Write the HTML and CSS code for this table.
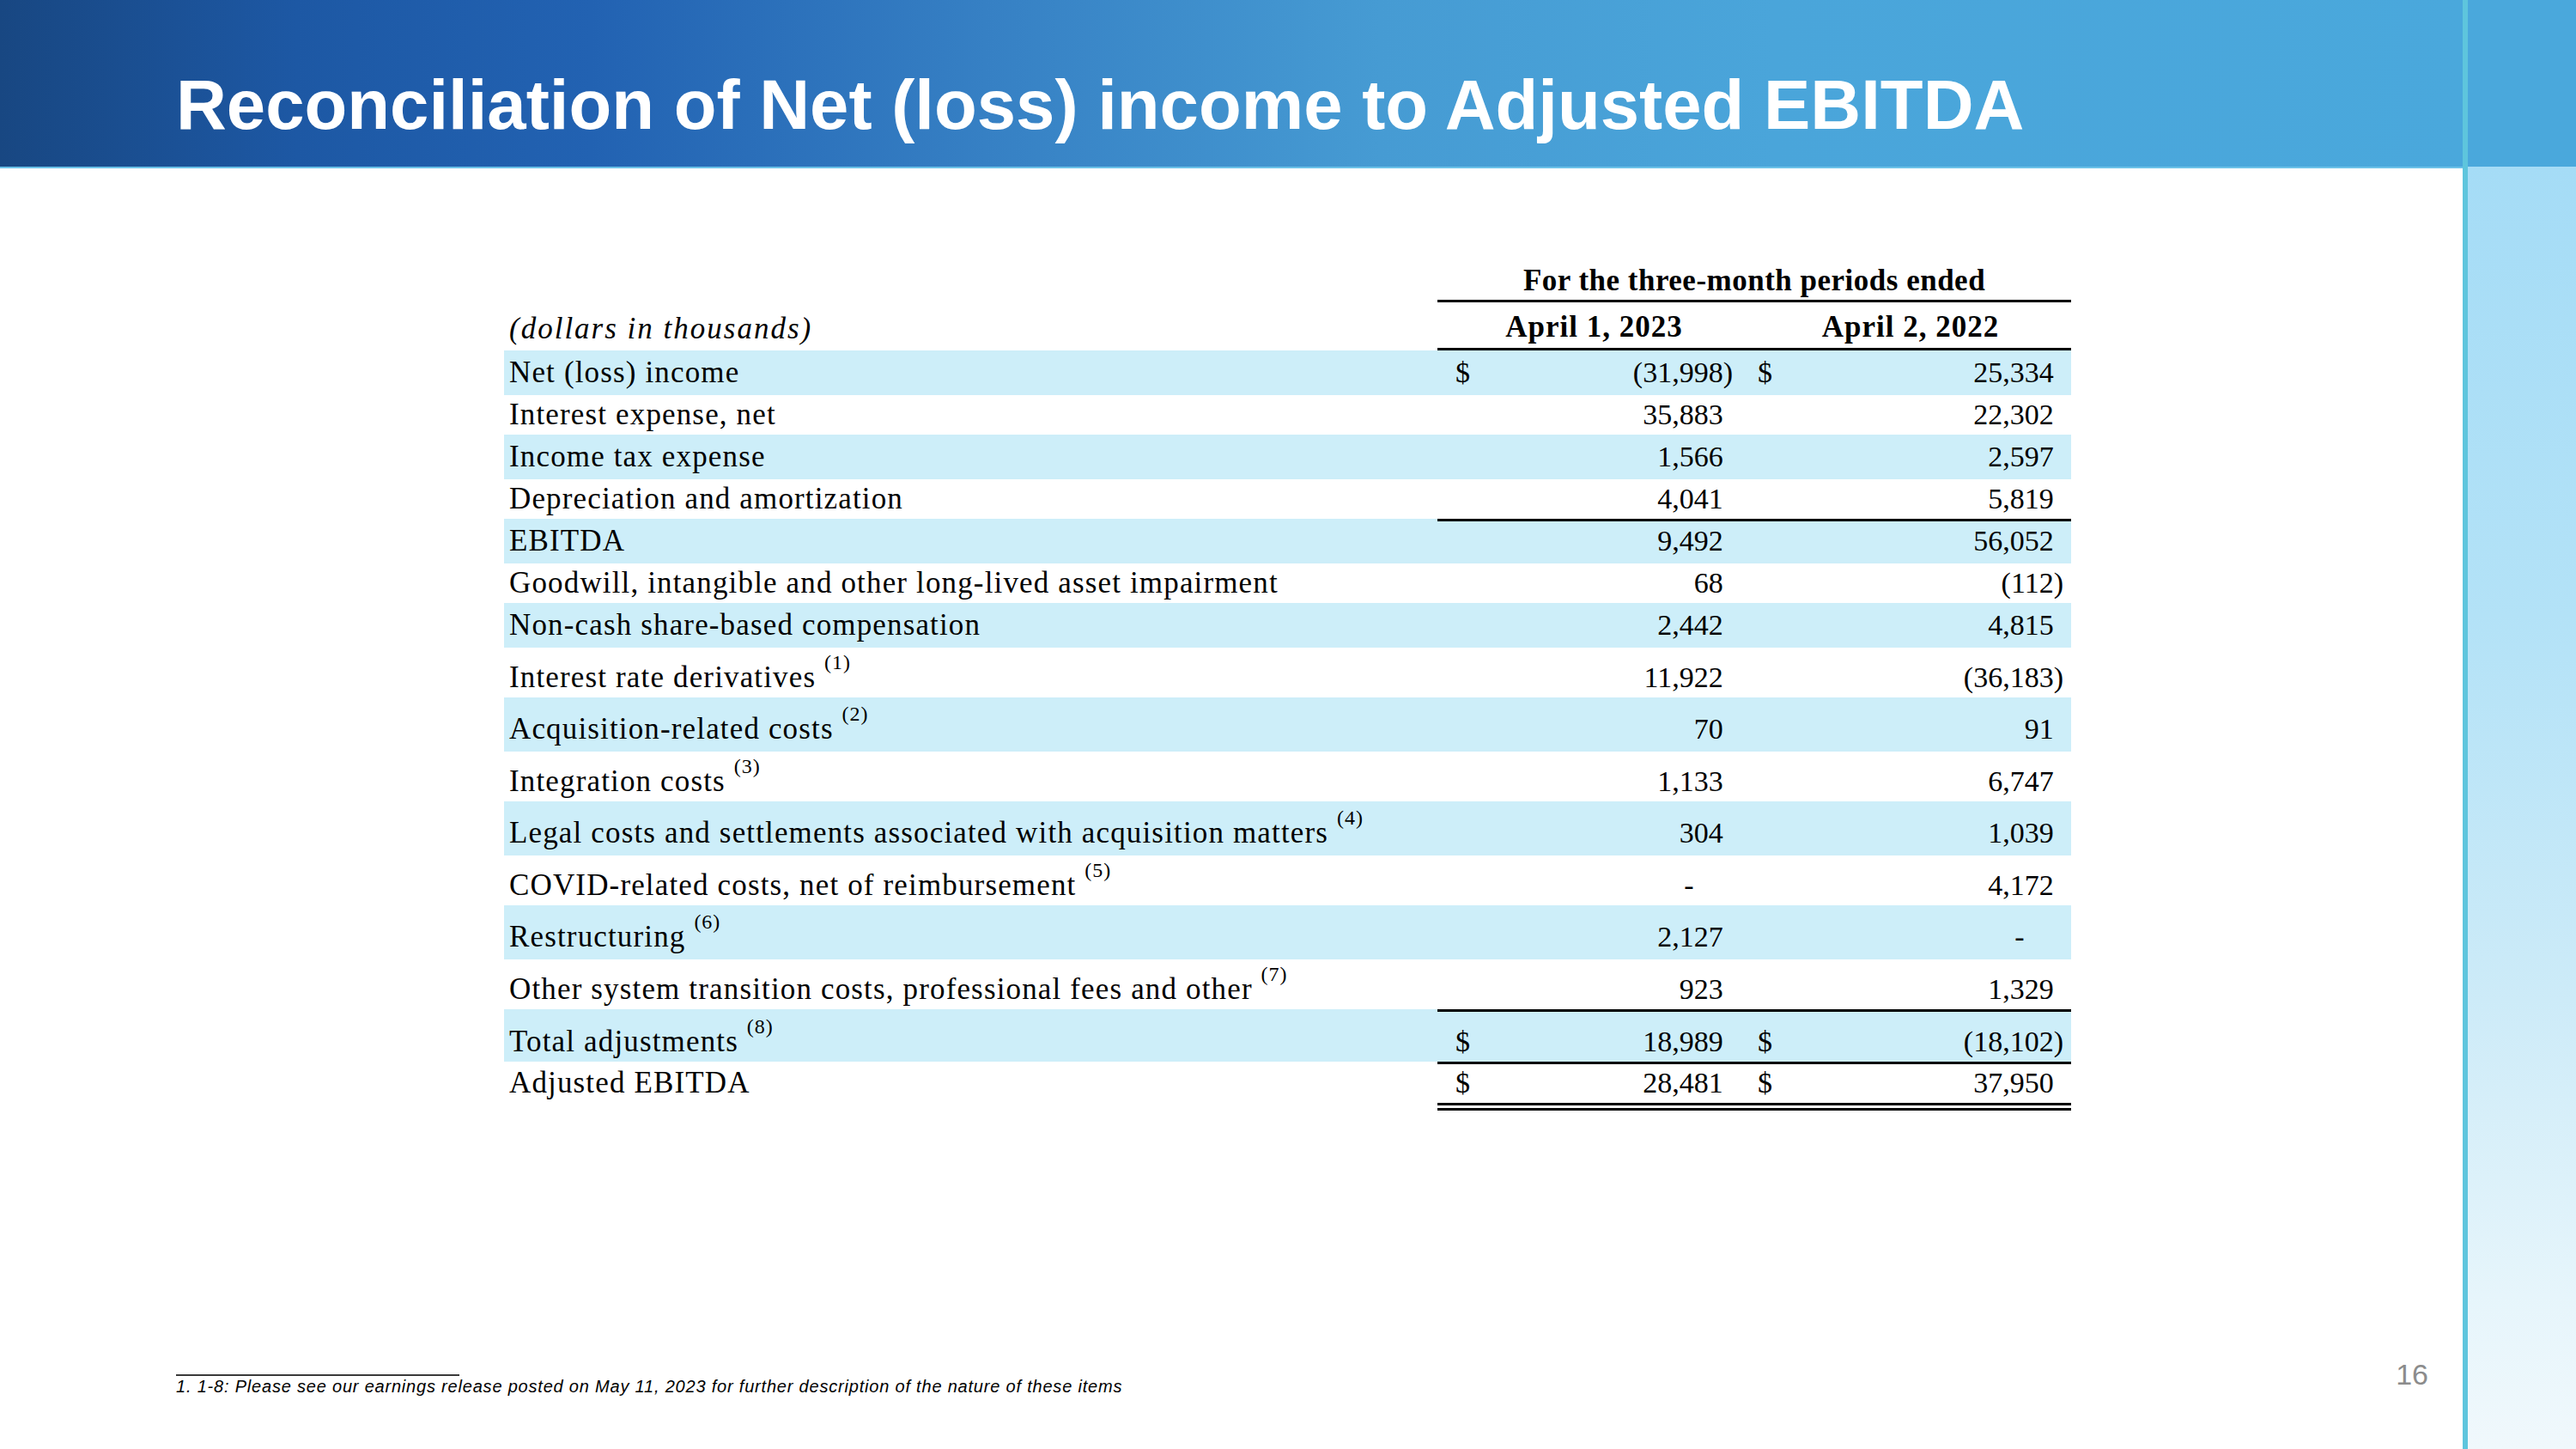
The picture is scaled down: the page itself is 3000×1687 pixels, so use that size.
FILE: index.html
```html
<!DOCTYPE html>
<html lang="en">
<head>
<meta charset="utf-8">
<title>Reconciliation of Net (loss) income to Adjusted EBITDA</title>
<link rel="stylesheet" href="styles.css">
</head>
<body>
<div class="slide">
  <div class="main">
    <header class="hdr">
      <h1 class="title">Reconciliation of Net (loss) income to Adjusted EBITDA</h1>
    </header>
    <section class="content">
      <div class="tbl">
        <div class="row th1">
          <div class="cell lbl"></div>
          <div class="cell span2">For the three-month periods ended</div>
        </div>
        <div class="row th2">
          <div class="cell lbl it"><span class="t">(dollars in thousands)</span></div>
          <div class="cell c1 hd">April 1, 2023</div>
          <div class="cell c2 hd">April 2, 2022</div>
        </div>

        <div class="row band">
          <div class="cell lbl"><span class="t">Net (loss) income</span></div>
          <div class="cell c1"><span class="cur">$</span><span class="v">(31,998<span class="rp">)</span></span></div>
          <div class="cell c2"><span class="cur">$</span><span class="v">25,334<span class="rp hide">)</span></span></div>
        </div>
        <div class="row">
          <div class="cell lbl"><span class="t">Interest expense, net</span></div>
          <div class="cell c1"><span class="v">35,883<span class="rp hide">)</span></span></div>
          <div class="cell c2"><span class="v">22,302<span class="rp hide">)</span></span></div>
        </div>
        <div class="row band">
          <div class="cell lbl"><span class="t">Income tax expense</span></div>
          <div class="cell c1"><span class="v">1,566<span class="rp hide">)</span></span></div>
          <div class="cell c2"><span class="v">2,597<span class="rp hide">)</span></span></div>
        </div>
        <div class="row">
          <div class="cell lbl"><span class="t">Depreciation and amortization</span></div>
          <div class="cell c1"><span class="v">4,041<span class="rp hide">)</span></span></div>
          <div class="cell c2"><span class="v">5,819<span class="rp hide">)</span></span></div>
        </div>
        <div class="row band">
          <div class="cell lbl"><span class="t">EBITDA</span></div>
          <div class="cell c1 rule"><span class="v">9,492<span class="rp hide">)</span></span></div>
          <div class="cell c2 rule"><span class="v">56,052<span class="rp hide">)</span></span></div>
        </div>
        <div class="row">
          <div class="cell lbl"><span class="t">Goodwill, intangible and other long-lived asset impairment</span></div>
          <div class="cell c1"><span class="v">68<span class="rp hide">)</span></span></div>
          <div class="cell c2"><span class="v">(112<span class="rp">)</span></span></div>
        </div>
        <div class="row band">
          <div class="cell lbl"><span class="t">Non-cash share-based compensation</span></div>
          <div class="cell c1"><span class="v">2,442<span class="rp hide">)</span></span></div>
          <div class="cell c2"><span class="v">4,815<span class="rp hide">)</span></span></div>
        </div>
        <div class="row tall">
          <div class="cell lbl"><span class="t">Interest rate derivatives <span class="fn">(1)</span></span></div>
          <div class="cell c1"><span class="v">11,922<span class="rp hide">)</span></span></div>
          <div class="cell c2"><span class="v">(36,183<span class="rp">)</span></span></div>
        </div>
        <div class="row band tall">
          <div class="cell lbl"><span class="t">Acquisition-related costs <span class="fn">(2)</span></span></div>
          <div class="cell c1"><span class="v">70<span class="rp hide">)</span></span></div>
          <div class="cell c2"><span class="v">91<span class="rp hide">)</span></span></div>
        </div>
        <div class="row tall">
          <div class="cell lbl"><span class="t">Integration costs <span class="fn">(3)</span></span></div>
          <div class="cell c1"><span class="v">1,133<span class="rp hide">)</span></span></div>
          <div class="cell c2"><span class="v">6,747<span class="rp hide">)</span></span></div>
        </div>
        <div class="row band tall">
          <div class="cell lbl"><span class="t">Legal costs and settlements associated with acquisition matters <span class="fn">(4)</span></span></div>
          <div class="cell c1"><span class="v">304<span class="rp hide">)</span></span></div>
          <div class="cell c2"><span class="v">1,039<span class="rp hide">)</span></span></div>
        </div>
        <div class="row tall">
          <div class="cell lbl"><span class="t">COVID-related costs, net of reimbursement <span class="fn">(5)</span></span></div>
          <div class="cell c1"><span class="v"><span class="dash">-</span><span class="rp hide">)</span></span></div>
          <div class="cell c2"><span class="v">4,172<span class="rp hide">)</span></span></div>
        </div>
        <div class="row band tall">
          <div class="cell lbl"><span class="t">Restructuring <span class="fn">(6)</span></span></div>
          <div class="cell c1"><span class="v">2,127<span class="rp hide">)</span></span></div>
          <div class="cell c2"><span class="v"><span class="dash">-</span><span class="rp hide">)</span></span></div>
        </div>
        <div class="row tall">
          <div class="cell lbl"><span class="t">Other system transition costs, professional fees and other <span class="fn">(7)</span></span></div>
          <div class="cell c1"><span class="v">923<span class="rp hide">)</span></span></div>
          <div class="cell c2"><span class="v">1,329<span class="rp hide">)</span></span></div>
        </div>
        <div class="row band total">
          <div class="cell lbl"><span class="t">Total adjustments <span class="fn">(8)</span></span></div>
          <div class="cell c1 rule"><span class="cur">$</span><span class="v">18,989<span class="rp hide">)</span></span></div>
          <div class="cell c2 rule"><span class="cur">$</span><span class="v">(18,102<span class="rp">)</span></span></div>
        </div>
        <div class="row final">
          <div class="cell lbl"><span class="t">Adjusted EBITDA</span></div>
          <div class="cell c1 rule dbl"><span class="cur">$</span><span class="v">28,481<span class="rp hide">)</span></span></div>
          <div class="cell c2 rule dbl"><span class="cur">$</span><span class="v">37,950<span class="rp hide">)</span></span></div>
        </div>
      </div>
    </section>
    <footer class="ftr">
      <div class="notes">
        <div class="note-rule"></div>
        <p class="note">1. 1-8: Please see our earnings release posted on May 11, 2023 for further description of the nature of these items</p>
      </div>
      <div class="pgnum">16</div>
    </footer>
  </div>
  <div class="vline"></div>
  <aside class="side">
    <div class="side-top"></div>
    <div class="side-body"></div>
  </aside>
</div>
</body>
</html>
```

FILE: styles.css
```css
html, body {
  margin: 0;
  padding: 0;
  background: #ffffff;
}

.slide {
  width: 3000px;
  height: 1687px;
  display: flex;
  overflow: hidden;
}

.main {
  width: 2868px;
  height: 1687px;
  display: flex;
  flex-direction: column;
  flex: none;
}

/* Header */
.hdr {
  height: 194px;
  border-bottom: 2px solid #6cc2e8;
  background: linear-gradient(90deg, #184782 0%, #1d58a4 12%, #2262b2 24%, #3680c4 40%, #469bd3 56%, #4aa5da 72%, #4aa8dc 100%);
  padding-left: 205px;
  box-sizing: content-box;
}

.title {
  margin: 0;
  padding-top: 81px;
  font-family: "Liberation Sans", Arial, sans-serif;
  font-weight: bold;
  font-size: 81.5px;
  line-height: 81px;
  color: #ffffff;
  white-space: nowrap;
}

/* Table */
.content {
  flex: 1;
  padding-top: 106px;
  padding-left: 587px;
}

.tbl {
  width: 1825px;
  color: #000;
  font-family: "Liberation Serif", "Times New Roman", serif;
}

.row {
  display: flex;
  height: 46px;
}

.row.band {
  background: #cdeef9;
  height: 52px;
}

.row.tall {
  height: 58px;
}

.row.band.tall {
  height: 63px;
}

.cell {
  box-sizing: border-box;
  display: flex;
  align-items: flex-end;
  line-height: 40px;
  padding-bottom: 3px;
  flex: none;
}

.row.band .cell {
  padding-bottom: 6px;
}

.lbl {
  width: 1087px;
  padding-left: 6px;
  font-size: 35px;
  letter-spacing: 1.15px;
  white-space: nowrap;
}

.t {
  display: block;
  line-height: 40px;
}

.c1, .c2 {
  font-size: 34px;
  justify-content: space-between;
}

.c1 {
  width: 356px;
  padding-left: 21px;
  padding-right: 12px;
}

.c2 {
  width: 382px;
  padding-left: 17px;
  padding-right: 9px;
}

.v {
  margin-left: auto;
  white-space: nowrap;
}

.rp.hide {
  visibility: hidden;
}

.dash {
  padding-right: 34px;
}

.fn {
  font-size: 24px;
  letter-spacing: 1px;
  line-height: 0;
  vertical-align: 21px;
}

.rule {
  border-top: 3px solid #000;
}

/* header rows */
.row.th1 {
  height: 50px;
}

.span2 {
  width: 738px;
  justify-content: center;
  font-size: 35px;
  font-weight: bold;
  letter-spacing: 0.5px;
  border-bottom: 3px solid #000;
}

.row.th1 .cell {
  padding-bottom: 2px;
}

.row.th2 {
  height: 56px;
}

.row.th2 .cell {
  padding-bottom: 4px;
}

.row.th2 .lbl {
  padding-bottom: 5px;
}

.hd {
  justify-content: center;
  font-size: 35px;
  font-weight: bold;
  letter-spacing: 1px;
  border-bottom: 3px solid #000;
}

.it {
  font-style: italic;
  letter-spacing: 2px;
}

.row.total {
  height: 61px;
}

.row.band.total .cell {
  padding-bottom: 3px;
}

.row.final {
  height: 57px;
}

.row.final .cell {
  padding-bottom: 3px;
}

.row.final .lbl {
  border-bottom: 9px solid transparent;
}

.dbl {
  border-bottom: 9px double #000;
}

/* Footer */
.ftr {
  height: 107px;
  display: flex;
  justify-content: space-between;
  padding-left: 205px;
  padding-right: 40px;
  flex: none;
}

.notes {
  padding-top: 20px;
}

.note-rule {
  width: 330px;
  height: 2px;
  background: #3a3a3a;
}

.note {
  margin: 0;
  font-family: "Liberation Sans", Arial, sans-serif;
  font-style: italic;
  font-size: 20px;
  letter-spacing: 0.8px;
  line-height: 24px;
  color: #000;
  white-space: nowrap;
}

.pgnum {
  font-family: "Liberation Sans", Arial, sans-serif;
  font-size: 34px;
  line-height: 40px;
  color: #8c8c8c;
}

/* Right decoration */
.vline {
  width: 6px;
  flex: none;
  background: #5ec5dd;
}

.side {
  width: 126px;
  flex: none;
  display: flex;
  flex-direction: column;
}

.side-top {
  height: 194px;
  background: #4aa8dc;
}

.side-body {
  flex: 1;
  background: linear-gradient(180deg, #a5dcf6 0%, #b3e2f7 35%, #cdebf8 65%, #e6f5fb 88%, #f0f8fc 100%);
}
```
